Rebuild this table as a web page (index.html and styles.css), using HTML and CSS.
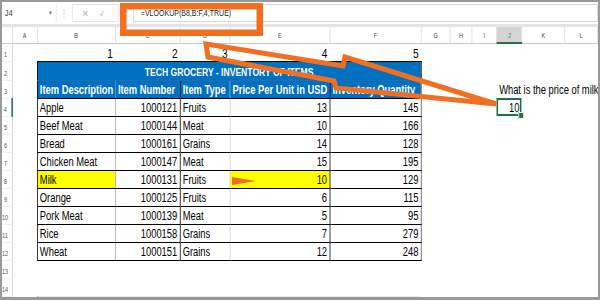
FILE: index.html
```html
<!DOCTYPE html>
<html lang="en">
<head>
    <meta charset="UTF-8">
    <title>Tech Grocery - VLOOKUP</title>
    <link rel="stylesheet" href="styles.css">
</head>
<body>
  <div class="frame">
    <div class="app">
      <div class="formula-bar">
        <div class="name-box">J4<span class="caret">&#9662;</span></div>
        <div class="dots">&#8942;</div>
        <div class="fx-buttons"><span>&#10005;</span><span>&#10003;</span></div>
        <div class="fx"></div>
        <div class="formula">=VLOOKUP(B8,B:F,4,TRUE)</div>
      </div>
      <div class="ribbon-gap"></div>

      <table class="sheet">
        <colgroup>
          <col class="c-hdr"><col class="c-a"><col class="c-b"><col class="c-c"><col class="c-d"><col class="c-e"><col class="c-f">
          <col class="c-g"><col class="c-h"><col class="c-i"><col class="c-j"><col class="c-k"><col class="c-l">
        </colgroup>
        <thead>
          <tr class="letters">
            <th class="corner"></th><th>A</th><th>B</th><th>C</th><th>D</th><th>E</th><th>F</th>
            <th>G</th><th>H</th><th>I</th><th class="active">J</th><th>K</th><th>L</th>
          </tr>
        </thead>
        <tbody>
          <tr class="nums">
            <th>1</th><td></td><td>1</td><td>2</td><td>3</td><td>4</td><td>5</td>
            <td></td><td></td><td></td><td></td><td></td><td></td>
          </tr>
          <tr class="title-row">
            <th>2</th><td></td><td colspan="5" class="title">TECH GROCERY - INVENTORY OF ITEMS</td>
            <td></td><td></td><td></td><td></td><td></td><td></td>
          </tr>
          <tr class="head">
            <th>3</th><td></td><td>Item Description</td><td>Item Number</td><td>Item Type</td><td>Price Per Unit in USD</td><td>Inventory Quantity</td>
            <td></td><td></td><td></td><td class="question">What is the price of milk?</td><td></td><td></td>
          </tr>
          <tr class="data">
            <th class="active">4</th><td></td><td>Apple</td><td>1000121</td><td>Fruits</td><td>13</td><td>145</td>
            <td></td><td></td><td></td><td class="picked">10</td><td></td><td></td>
          </tr>
          <tr class="data">
            <th>5</th><td></td><td>Beef Meat</td><td>1000144</td><td>Meat</td><td>10</td><td>166</td>
            <td></td><td></td><td></td><td></td><td></td><td></td>
          </tr>
          <tr class="data">
            <th>6</th><td></td><td>Bread</td><td>1000161</td><td>Grains</td><td>14</td><td>128</td>
            <td></td><td></td><td></td><td></td><td></td><td></td>
          </tr>
          <tr class="data">
            <th>7</th><td></td><td>Chicken Meat</td><td>1000147</td><td>Meat</td><td>15</td><td>195</td>
            <td></td><td></td><td></td><td></td><td></td><td></td>
          </tr>
          <tr class="data">
            <th>8</th><td></td><td class="hl">Milk</td><td>1000131</td><td>Fruits</td><td class="hl">10</td><td>129</td>
            <td></td><td></td><td></td><td></td><td></td><td></td>
          </tr>
          <tr class="data">
            <th>9</th><td></td><td>Orange</td><td>1000125</td><td>Fruits</td><td>6</td><td>115</td>
            <td></td><td></td><td></td><td></td><td></td><td></td>
          </tr>
          <tr class="data">
            <th>10</th><td></td><td>Pork Meat</td><td>1000139</td><td>Meat</td><td>5</td><td>95</td>
            <td></td><td></td><td></td><td></td><td></td><td></td>
          </tr>
          <tr class="data">
            <th>11</th><td></td><td>Rice</td><td>1000158</td><td>Grains</td><td>7</td><td>279</td>
            <td></td><td></td><td></td><td></td><td></td><td></td>
          </tr>
          <tr class="data">
            <th>12</th><td></td><td>Wheat</td><td>1000151</td><td>Grains</td><td>12</td><td>248</td>
            <td></td><td></td><td></td><td></td><td></td><td></td>
          </tr>
          <tr>
            <th>13</th><td></td><td></td><td></td><td></td><td></td><td></td>
            <td></td><td></td><td></td><td></td><td></td><td></td>
          </tr>
          <tr>
            <th>14</th><td></td><td></td><td></td><td></td><td></td><td></td>
            <td></td><td></td><td></td><td></td><td></td><td></td>
          </tr>
          <tr class="last">
            <th></th><td></td><td colspan="5" class="strip"></td>
            <td></td><td></td><td></td><td></td><td></td><td></td>
          </tr>
        </tbody>
      </table>
    </div>

    <!-- callout marks drawn over the sheet -->
    <svg class="callouts" width="600" height="300" viewBox="0 0 600 300">
      <rect x="123.25" y="6.25" width="136.5" height="26.5" fill="none" stroke="#f26f21" stroke-width="6.5"/>
      <polygon points="206,44 343,66 345,57 496,104 336,88 334,81 208,57" fill="none" stroke="#f26f21" stroke-width="5"/>
      <polygon points="232,177 256,181 232,185" fill="#f26f21"/>
    </svg>
  </div>
</body>
</html>
```

FILE: styles.css
```css
html, body {
    margin: 0;
    padding: 0;
    background-color: #ffffff;
}

.frame {
    position: relative;
    width: 600px;
    height: 300px;
    box-sizing: border-box;
    border: 2px solid #9a9a9a;
    border-bottom-width: 3px;
    overflow: hidden;
    font-family: "Liberation Sans", Arial, sans-serif;
    color: #000;
}

/* the shot is squeezed sideways, so the sheet is laid out wide and narrowed */
.app {
    width: 764px;
    transform: scaleX(0.78);
    transform-origin: 0 0;
}

/* Formula bar */
.formula-bar {
    display: flex;
    align-items: center;
    height: 22px;
}

.name-box {
    width: 70px;
    height: 18px;
    box-sizing: border-box;
    display: flex;
    align-items: center;
    justify-content: space-between;
    padding: 0 5px 0 4px;
    font-size: 9px;
    color: #333;
    border-right: 1px solid #e6e6e6;
}

.caret {
    font-size: 7px;
    color: #666;
}

.dots {
    width: 20px;
    text-align: center;
    font-size: 10px;
    color: #aaa;
}

.fx-buttons {
    width: 60px;
    height: 18px;
    box-sizing: border-box;
    display: flex;
    align-items: center;
    gap: 14px;
    padding-left: 11px;
    border: 1px solid #e6e6e6;
    font-size: 10px;
    color: #b9b9b9;
}

.fx {
    width: 18px;
}

.formula {
    flex: 1;
    height: 18px;
    box-sizing: border-box;
    display: flex;
    align-items: center;
    padding-left: 9px;
    border: 1px solid #d8d8d8;
    font-size: 9px;
    color: #222;
}

.ribbon-gap {
    height: 3px;
    background-color: #e4e4e4;
}

/* Sheet grid */
.sheet {
    width: 764px;
    table-layout: fixed;
    border-collapse: collapse;
    font-size: 12px;
}

.c-hdr { width: 13px; }
.c-a { width: 32px; }
.c-b { width: 100px; }
.c-c { width: 83px; }
.c-d { width: 64px; }
.c-e { width: 128px; }
.c-f { width: 117px; }
.c-g { width: 37px; }
.c-h { width: 28px; }
.c-i { width: 32px; }
.c-j { width: 32px; }
.c-k { width: 55px; }
.c-l { width: 42px; }

.sheet td {
    padding: 0 3px 1px 3px;
    line-height: 14px;
    white-space: nowrap;
    vertical-align: bottom;
}

.letters th {
    height: 13px;
    padding: 2px 0 0 0;
    font-size: 7px;
    font-weight: normal;
    color: #444;
    background-color: #fff;
    border-right: 1px solid #dcdcdc;
    border-bottom: 1px solid #c8c8c8;
    vertical-align: middle;
}

.letters th.active {
    background-color: #d4d4d4;
    color: #217346;
    border-bottom: 2px solid #217346;
}

tbody th {
    padding: 0 6px 3px 0;
    font-size: 7px;
    font-weight: normal;
    color: #555;
    text-align: right;
    vertical-align: bottom;
    white-space: nowrap;
    border-right: 1px solid #d0d0d0;
    border-bottom: 1px solid #f0f0f0;
}

tbody th.active {
    color: #217346;
    border-right: 2px solid #217346;
}

tbody tr { height: 18px; }
.title-row { height: 19px; }

/* row 1: column numbers */
.nums td {
    font-size: 13px;
    text-align: right;
    padding-bottom: 0;
}

/* title + header band */
.title {
    background-color: #0070c0;
    color: #fff;
    font-size: 11px;
    font-weight: bold;
    text-align: center;
    border: 1px solid #000;
    border-bottom: 1px solid #2a6aa8;
}

.head td:nth-child(n+3):nth-child(-n+7) {
    background-color: #0070c0;
    color: #fff;
    font-weight: bold;
    border-bottom: 1px solid #000;
}

.head td:nth-child(3),
.data td:nth-child(3) { border-left: 1px solid #000; }
.head td:nth-child(4) { border-left: 1px solid #5b9bd5; }
.data td:nth-child(4) { border-left: 1px solid #a8a8a8; }
.head td:nth-child(5),
.data td:nth-child(5) { border-left: 1px solid #000; }
.head td:nth-child(6) { border-left: 1px solid #5b9bd5; }
.data td:nth-child(6) { border-left: 1px solid #cfcfcf; }
.head td:nth-child(7),
.data td:nth-child(7) {
    border-left: 1px solid #000;
    border-right: 1px solid #555;
}

.data td:nth-child(n+3):nth-child(-n+7) {
    border-bottom: 1px solid #000;
}

.data td:nth-child(4),
.data td:nth-child(6),
.data td:nth-child(7) {
    text-align: right;
}

.data td.hl {
    background-color: #ffff00;
}

.question {
    overflow: visible;
}

.data td.picked {
    position: relative;
    text-align: right;
    outline: 2px solid #217346;
    outline-offset: -2px;
}

.data td.picked::after {
    content: "";
    position: absolute;
    right: -3px;
    bottom: -3px;
    width: 5px;
    height: 5px;
    background-color: #217346;
    border: 1px solid #fff;
}

.last { height: 6px; }

.strip {
    background-color: #fbe7e7;
    border-left: 1px solid #e06666;
}

/* callouts */
.callouts {
    position: absolute;
    top: -2px;
    left: -2px;
    pointer-events: none;
}
```
